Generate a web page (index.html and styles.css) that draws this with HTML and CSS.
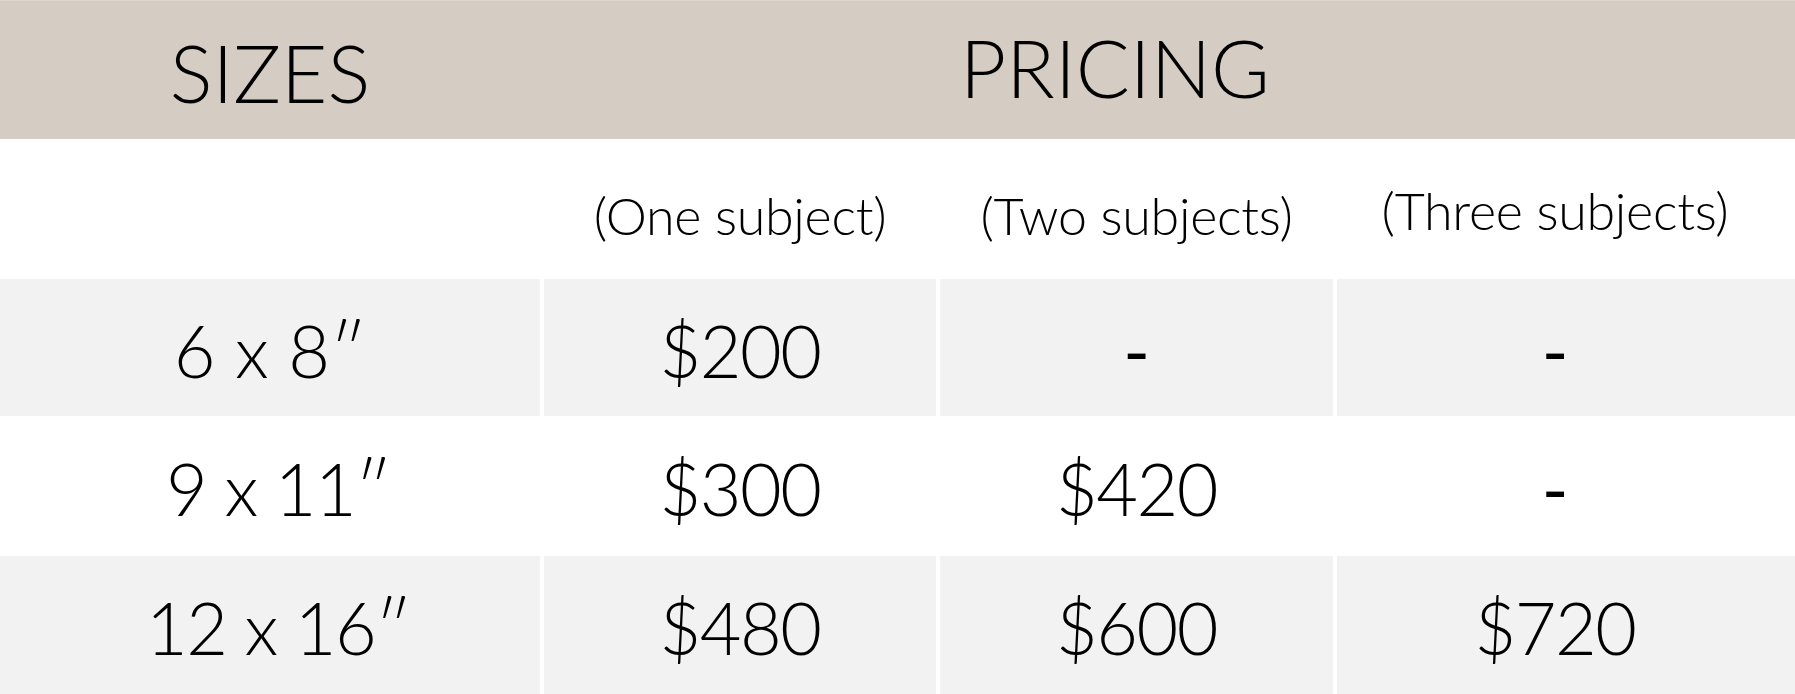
FILE: index.html
```html
<!DOCTYPE html>
<html lang="en">
<head>
<meta charset="utf-8">
<title>Pricing</title>
<link rel="stylesheet" href="styles.css">
</head>
<body>
<div class="table">
  <div class="head">
    <div class="head-cell sizes">SIZES</div>
    <div class="head-cell pricing">PRICING</div>
  </div>
  <div class="sub">
    <div class="cell"></div>
    <div class="cell">(One subject)</div>
    <div class="cell">(Two subjects)</div>
    <div class="cell last three">(Three subjects)</div>
  </div>
  <div class="row shade r1">
    <div class="cell size">6 x 8″</div>
    <div class="cell price">$200</div>
    <div class="cell dash">-</div>
    <div class="cell last dash">-</div>
  </div>
  <div class="row r2">
    <div class="cell size narrow">9 x 11″</div>
    <div class="cell price">$300</div>
    <div class="cell price">$420</div>
    <div class="cell last dash">-</div>
  </div>
  <div class="row shade r3">
    <div class="cell size narrow">12 x 16″</div>
    <div class="cell price">$480</div>
    <div class="cell price">$600</div>
    <div class="cell last price">$720</div>
  </div>
</div>
</body>
</html>
```

FILE: styles.css
```css
html, body {
  margin: 0;
  padding: 0;
  background: #ffffff;
}

body {
  font-family: "Lato", "Liberation Sans", sans-serif;
  font-weight: 300;
  color: #000000;
  width: 1795px;
  height: 694px;
  overflow: hidden;
}

.table {
  display: flex;
  flex-direction: column;
}

.head,
.sub,
.row {
  display: grid;
  grid-template-columns: 540px 392px 393px 1fr;
  column-gap: 4px;
}

.head {
  background: #d5ccc3;
  border-top: 1px solid #ddd6cf;
  height: 138px;
}

.head-cell {
  display: flex;
  align-items: center;
  justify-content: center;
  font-size: 80px;
  line-height: 1;
}

.sizes {
  padding-top: 4px;
}

.pricing {
  grid-column: 2 / 5;
  padding-right: 109px;
  padding-bottom: 6px;
}

.cell {
  display: flex;
  align-items: center;
  justify-content: center;
  line-height: 1;
  white-space: nowrap;
}

.cell.last {
  padding-right: 22px;
}

.sub {
  height: 140px;
  font-size: 52px;
}

.sub .cell {
  padding-top: 12px;
  letter-spacing: -0.3px;
}

.sub .three {
  padding-top: 2px;
}

.row {
  font-size: 72px;
}

.r1 { height: 137px; }
.r2 { height: 140px; }
.r3 { height: 138px; }

.row .cell {
  padding-top: 4px;
}

.row .price {
  letter-spacing: -1.5px;
}

.row .size.narrow {
  letter-spacing: -1.5px;
  padding-left: 16px;
}

.row .dash {
  font-weight: 400;
}

.shade .cell {
  background: #f2f2f2;
}
```
